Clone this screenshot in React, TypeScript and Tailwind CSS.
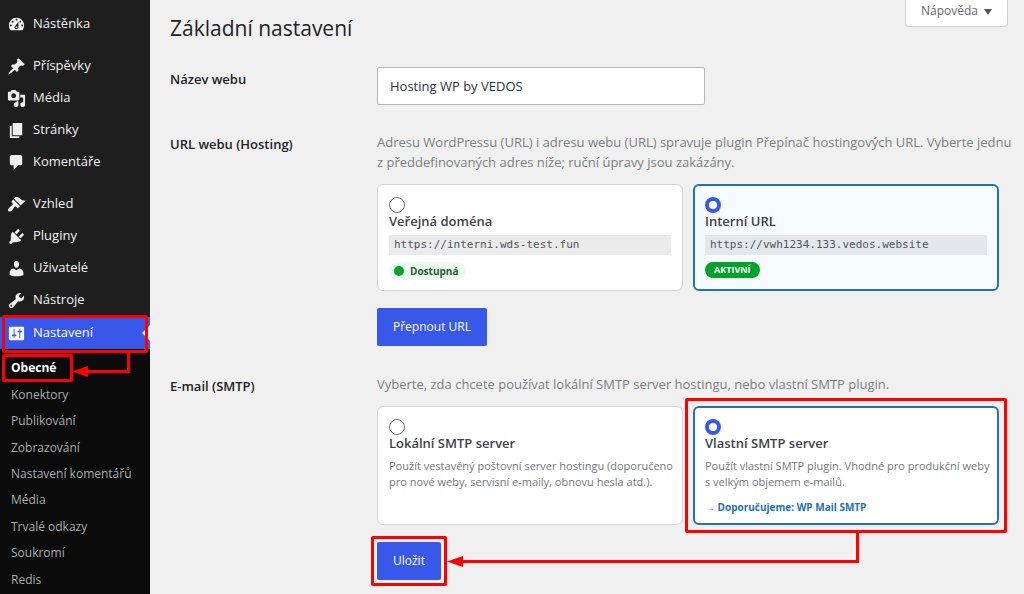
import { useState } from "react";
import clsx from "clsx";

type MenuItem = {
  label: string;
  icon: string;
  startsGroup?: boolean;
};

// 20x20 admin glyphs
const menuItems: MenuItem[] = [
  {
    label: "Nástěnka",
    icon: "M3.76 16h12.48c1.1-1.37 1.76-3.11 1.76-5 0-4.42-3.58-8-8-8s-8 3.58-8 8c0 1.89.66 3.63 1.76 5zM10 4c.55 0 1 .45 1 1s-.45 1-1 1-1-.45-1-1 .45-1 1-1zM6 6c.55 0 1 .45 1 1s-.45 1-1 1-1-.45-1-1 .45-1 1-1zm8 0c.55 0 1 .45 1 1s-.45 1-1 1-1-.45-1-1 .45-1 1-1zm-5.37 5.55L12 7v6c0 1.1-.9 2-2 2s-2-.9-2-2c0-.57.24-1.08.63-1.45zM4 10c.55 0 1 .45 1 1s-.45 1-1 1-1-.45-1-1 .45-1 1-1zm12 0c.55 0 1 .45 1 1s-.45 1-1 1-1-.45-1-1 .45-1 1-1zm-5 3c0-.55-.45-1-1-1s-1 .45-1 1 .45 1 1 1 1-.45 1-1z",
  },
  {
    label: "Příspěvky",
    startsGroup: true,
    icon: "M10.44 3.02l1.82-1.82 6.36 6.35-1.83 1.82c-1.05-.68-2.48-.57-3.41.36l-.75.75c-.92.93-1.04 2.35-.35 3.41l-1.83 1.82-2.41-2.41-2.8 2.79c-.42.42-3.38 2.71-3.8 2.29s1.86-3.39 2.28-3.81l2.79-2.79L4.1 9.36l1.83-1.82c1.05.69 2.48.57 3.4-.36l.75-.75c.93-.92 1.05-2.35.36-3.41z",
  },
  {
    label: "Média",
    icon: "M13 11V4c0-.55-.45-1-1-1h-1.67L9 1H5L3.67 3H2c-.55 0-1 .45-1 1v7c0 .55.45 1 1 1h10c.55 0 1-.45 1-1zM7 4.5c1.38 0 2.5 1.12 2.5 2.5S8.38 9.5 7 9.5 4.5 8.38 4.5 7 5.62 4.5 7 4.5zM14 6h5v10.5c0 1.38-1.12 2.5-2.5 2.5S14 17.88 14 16.5s1.12-2.5 2.5-2.5c.17 0 .34.02.5.05V9h-3V6zm-4 8.05V13h2v3.5c0 1.38-1.12 2.5-2.5 2.5S7 17.88 7 16.5 8.12 14 9.5 14c.17 0 .34.02.5.05z",
  },
  {
    label: "Stránky",
    icon: "M6 15V2h10v13H6zm-1 1h8v2H3V5h2v11z",
  },
  {
    label: "Komentáře",
    icon: "M5 2h9c1.1 0 2 .9 2 2v7c0 1.1-.9 2-2 2h-2l-5 5v-5H5c-1.1 0-2-.9-2-2V4c0-1.1.9-2 2-2z",
  },
  {
    label: "Vzhled",
    startsGroup: true,
    icon: "M14.48 11.06L7.41 3.99l1.5-1.5c.5-.56 2.3-.47 3.51.32 1.21.8 1.43 1.28 2.91 2.1 1.18.64 2.45 1.26 4.45.85zm-.71.71L6.7 4.7 4.93 6.47c-.39.39-.39 1.02 0 1.41l1.06 1.06c.39.39.39 1.03 0 1.42-.6.6-1.43 1.11-2.21 1.69-.35.26-.7.53-1.01.84C1.43 14.23.4 16.08 1.4 17.07c.99 1 2.84-.03 4.18-1.36.31-.31.58-.66.85-1.02.57-.78 1.08-1.61 1.69-2.21.39-.39 1.02-.39 1.41 0l1.06 1.06c.39.39 1.02.39 1.41 0z",
  },
  {
    label: "Pluginy",
    icon: "M13.11 4.36L9.87 7.6 8 5.73l3.24-3.24c.35-.34 1.05-.2 1.56.32.52.51.66 1.21.31 1.55zm-8 1.77l.91-1.12 9.01 9.01-1.19.84c-.71.71-2.63 1.16-3.82 1.16H6.14L4.9 17.26c-.59.59-1.54.59-2.12 0-.59-.58-.59-1.53 0-2.12l1.24-1.24v-3.88c0-1.13.4-3.19 1.09-3.89zm7.26 3.97l3.24-3.24c.34-.35 1.04-.21 1.55.31.52.51.66 1.21.31 1.55l-3.24 3.25z",
  },
  {
    label: "Uživatelé",
    icon: "M10 9.25c-2.27 0-2.73-3.44-2.73-3.44C7 4.02 7.82 2 9.97 2c2.16 0 2.98 2.02 2.71 3.81 0 0-.41 3.44-2.68 3.44zm0 2.57L12.72 10c2.39 0 4.52 2.33 4.52 4.53v2.49s-3.65 1.13-7.24 1.13c-3.65 0-7.24-1.13-7.24-1.13v-2.49c0-2.25 1.94-4.48 4.47-4.48z",
  },
  {
    label: "Nástroje",
    icon: "M16.68 9.77c-1.34 1.34-3.3 1.67-4.95.99l-5.41 6.52c-.99.99-2.59.99-3.58 0s-.99-2.59 0-3.57l6.52-5.42c-.68-1.65-.35-3.61.99-4.95 1.28-1.28 3.12-1.62 4.72-1.06l-2.89 2.89 2.82 2.82 2.86-2.87c.53 1.58.18 3.39-1.08 4.65zM3.81 16.21c.4.39 1.04.39 1.43 0 .4-.4.4-1.04 0-1.43-.39-.4-1.03-.4-1.43 0-.39.39-.39 1.03 0 1.43z",
  },
];

const settingsIcon =
  "M18 16V4c0-.55-.45-1-1-1H3c-.55 0-1 .45-1 1v12c0 .55.45 1 1 1h14c.55 0 1-.45 1-1zM8 11h1c.55 0 1 .45 1 1s-.45 1-1 1H8v1.5c0 .28-.22.5-.5.5s-.5-.22-.5-.5V13H6c-.55 0-1-.45-1-1s.45-1 1-1h1V5.5c0-.28.22-.5.5-.5s.5.22.5.5V11zm5-2h-1c-.55 0-1-.45-1-1s.45-1 1-1h1V5.5c0-.28.22-.5.5-.5s.5.22.5.5V7h1c.55 0 1 .45 1 1s-.45 1-1 1h-1v5.5c0 .28-.22.5-.5.5s-.5-.22-.5-.5V9z";

const submenuItems = [
  "Konektory",
  "Publikování",
  "Zobrazování",
  "Nastavení komentářů",
  "Média",
  "Trvalé odkazy",
  "Soukromí",
  "Redis",
];

function MenuIcon({ path }: { path: string }) {
  return (
    <svg
      viewBox="0 0 20 20"
      className="size-[19px] shrink-0"
      fill="currentColor"
      aria-hidden="true"
    >
      <path fillRule="evenodd" d={path} />
    </svg>
  );
}

// Red frame drawn around whatever it is placed in
function Highlight({ className }: { className: string }) {
  return (
    <span
      className={clsx(
        "pointer-events-none absolute z-10 rounded-xs border-3 border-[#fe0000]",
        className
      )}
    />
  );
}

// Elbow arrow: down the right side, then left to the head
function ElbowArrow({ className }: { className: string }) {
  return (
    <div
      className={clsx(
        "pointer-events-none absolute z-10 border-r-3 border-b-3 border-[#fe0000]",
        className
      )}
      aria-hidden="true"
    >
      <svg
        viewBox="0 0 16 11"
        className="absolute -bottom-[7px] -left-3 h-[11px] w-4"
        fill="#fe0000"
      >
        <path d="M0 5.5 16 0v11z" />
      </svg>
    </div>
  );
}

function Sidebar() {
  return (
    <nav className="flex w-[150px] shrink-0 flex-col bg-[#1e1e1e] pt-2 text-[13px] text-[#f0f0f1]">
      <ul>
        {menuItems.map((item) => (
          <li key={item.label} className={clsx(item.startsGroup && "mt-[10px]")}>
            <a href="#" className="flex h-8 items-center gap-[7px] pl-[7px]">
              <MenuIcon path={item.icon} />
              {item.label}
            </a>
          </li>
        ))}
      </ul>

      <div className="relative mt-px bg-[#3858e9] text-white">
        <a href="#" className="flex h-8 items-center gap-[7px] pl-[7px]">
          <MenuIcon path={settingsIcon} />
          Nastavení
        </a>
        <svg
          viewBox="0 0 8 16"
          className="absolute top-2 right-0 h-4 w-2"
          fill="#f0f0f1"
          aria-hidden="true"
        >
          <path d="M8 0v16L0 8z" />
        </svg>
        <Highlight className="-top-0.5 right-0.5 -bottom-1 left-0.5" />
      </div>

      <ul className="flex flex-1 flex-col bg-[#0b0b0b] pt-[6px] pb-px text-[12px] text-[#a9abae]">
        <li className="relative flex min-h-6 flex-1 items-center pl-[11px]">
          <a href="#" className="font-bold text-white" aria-current="page">
            Obecné
          </a>
          <Highlight className="-top-px -bottom-px left-0.5 w-[71px]" />
          <ElbowArrow className="-top-0.5 left-[84px] h-[20px] w-[46px]" />
        </li>
        {submenuItems.map((label) => (
          <li key={label} className="flex min-h-6 flex-1 items-center pl-[11px]">
            <a href="#">{label}</a>
          </li>
        ))}
      </ul>
    </nav>
  );
}

type OptionCardProps = {
  name: string;
  title: string;
  checked: boolean;
  tinted?: boolean;
  highlighted?: boolean;
  onSelect: () => void;
  children: React.ReactNode;
};

function OptionCard({
  name,
  title,
  checked,
  tinted,
  highlighted,
  onSelect,
  children,
}: OptionCardProps) {
  return (
    <label
      className={clsx(
        "relative block rounded-md",
        checked
          ? "border-2 border-[#2271b1] px-[10px] pt-[11px]"
          : "border border-[#d5d5d7] px-[11px] pt-3",
        checked && tinted ? "bg-[#f6fbff]" : "bg-white"
      )}
    >
      <input
        type="radio"
        name={name}
        checked={checked}
        onChange={onSelect}
        className="block size-4 appearance-none rounded-full border border-[#6c6f73] bg-white checked:border-4 checked:border-[#3858e9]"
      />
      <span className="block text-[13px] leading-4 font-semibold text-[#3c434a]">
        {title}
      </span>
      {children}
      {highlighted && <Highlight className="-inset-[10px]" />}
    </label>
  );
}

function PrimaryButton({ children }: { children: React.ReactNode }) {
  return (
    <button
      type="submit"
      className="h-[38px] rounded-xs bg-[#3858e9] px-4 text-[12px] font-medium text-white"
    >
      {children}
    </button>
  );
}

export default function App() {
  const [siteName, setSiteName] = useState("Hosting WP by VEDOS");
  const [url, setUrl] = useState("internal");
  const [smtp, setSmtp] = useState("custom");

  return (
    <div className="flex min-h-screen bg-[#f0f0f0] font-['Open_Sans','Noto_Sans',sans-serif] text-[#1d2327]">
      <Sidebar />

      <main className="min-w-0 flex-1 pr-[25px] pl-5">
        <div className="flex items-start justify-between">
          <h1 className="pt-3 text-[21px] leading-8">Základní nastavení</h1>
          <button
            type="button"
            className="-mr-[9px] flex h-[27px] items-center gap-[6px] rounded-b-sm border border-t-0 border-[#cfd0d2] bg-white px-[15px] pb-1 text-[12px] text-[#646970]"
          >
            Nápověda
            <svg
              viewBox="0 0 8 6"
              className="mt-0.5 h-[6px] w-2"
              fill="#50575e"
              aria-hidden="true"
            >
              <path d="M0 0h8L4 6z" />
            </svg>
          </button>
        </div>

        <form
          onSubmit={(event) => event.preventDefault()}
          className="mt-[23px] flex flex-col"
        >
          <div className="grid grid-cols-[207px_1fr]">
            <label
              htmlFor="site-name"
              className="pt-0.5 text-[13px] leading-5 font-semibold"
            >
              Název webu
            </label>
            <input
              id="site-name"
              type="text"
              value={siteName}
              onChange={(event) => setSiteName(event.target.value)}
              className="h-[38px] w-[328px] rounded-xs border border-[#b5b7ba] bg-white px-3 text-[13px] text-[#2c3338]"
            />
          </div>

          <div
            role="radiogroup"
            aria-labelledby="url-heading"
            className="mt-[27px] grid grid-cols-[207px_1fr]"
          >
            <h2
              id="url-heading"
              className="pt-0.5 text-[13px] leading-5 font-semibold"
            >
              URL webu (Hosting)
            </h2>
            <div>
              <p className="-mr-5 text-[13px] leading-5 text-[#7c8085]">
                Adresu WordPressu (URL) i adresu webu (URL) spravuje plugin
                Přepínač hostingových URL. Vyberte jednu z&nbsp;předdefinovaných
                adres níže; ruční úpravy jsou zakázány.
              </p>
              <div className="mt-3 grid grid-cols-2 gap-[10px]">
                <OptionCard
                  name="url"
                  title="Veřejná doména"
                  checked={url === "public"}
                  tinted
                  onSelect={() => setUrl("public")}
                >
                  <code className="mt-[6px] block bg-[#ebebec] px-[5px] font-['DejaVu_Sans_Mono',monospace] text-[11px] leading-5 text-[#50575e]">
                    https://interni.wds-test.fun
                  </code>
                  <span className="mt-[7px] mb-[10px] flex h-[18px] w-fit items-center gap-[6px] rounded-full bg-[#edfaef] pr-2 pl-[5px] text-[10px] font-bold text-[#1e6031]">
                    <span className="size-[10px] rounded-full bg-[#00a32a]" />
                    Dostupná
                  </span>
                </OptionCard>
                <OptionCard
                  name="url"
                  title="Interní URL"
                  checked={url === "internal"}
                  tinted
                  onSelect={() => setUrl("internal")}
                >
                  <code className="mt-[6px] block bg-[#e4e8ec] px-[5px] font-['DejaVu_Sans_Mono',monospace] text-[11px] leading-5 text-[#50575e]">
                    https://vwh1234.133.vedos.website
                  </code>
                  <span className="mt-[7px] flex h-4 w-fit items-center rounded-full bg-[#00a32a] px-[9px] text-[9px] font-bold text-white">
                    AKTIVNÍ
                  </span>
                </OptionCard>
              </div>
              <div className="mt-[17px]">
                <PrimaryButton>Přepnout URL</PrimaryButton>
              </div>
            </div>
          </div>

          <div
            role="radiogroup"
            aria-labelledby="smtp-heading"
            className="mt-7 grid grid-cols-[207px_1fr]"
          >
            <h2
              id="smtp-heading"
              className="pt-0.5 text-[13px] leading-5 font-semibold"
            >
              E-mail (SMTP)
            </h2>
            <div>
              <p className="-mr-5 text-[13px] leading-5 text-[#7c8085]">
                Vyberte, zda chcete používat lokální SMTP server hostingu, nebo
                vlastní SMTP plugin.
              </p>
              <div className="mt-3 grid grid-cols-2 gap-[10px]">
                <OptionCard
                  name="smtp"
                  title="Lokální SMTP server"
                  checked={smtp === "local"}
                  onSelect={() => setSmtp("local")}
                >
                  <span className="mt-[7px] -mr-2 block text-[11px] leading-4 text-[#73777c]">
                    Použít vestavěný poštovní server hostingu (doporučeno pro
                    nové weby, servisní e-maily, obnovu hesla atd.).
                  </span>
                </OptionCard>
                <OptionCard
                  name="smtp"
                  title="Vlastní SMTP server"
                  checked={smtp === "custom"}
                  highlighted
                  onSelect={() => setSmtp("custom")}
                >
                  <span className="mt-[7px] -mr-2 block text-[11px] leading-4 text-[#73777c]">
                    Použít vlastní SMTP plugin. Vhodné pro produkční weby
                    s&nbsp;velkým objemem e-mailů.
                  </span>
                  <a
                    href="#"
                    className="mt-[9px] mb-2 block text-[10px] leading-4 font-bold text-[#2271b1]"
                  >
                    → Doporučujeme: WP Mail SMTP
                  </a>
                </OptionCard>
              </div>
              <div className="relative mt-[17px] mb-[14px]">
                <div className="relative w-fit">
                  <PrimaryButton>Uložit</PrimaryButton>
                  <Highlight className="-inset-[6px]" />
                </div>
                <ElbowArrow className="-top-[10px] right-[140px] left-[82px] h-[31px]" />
              </div>
            </div>
          </div>
        </form>
      </main>
    </div>
  );
}
